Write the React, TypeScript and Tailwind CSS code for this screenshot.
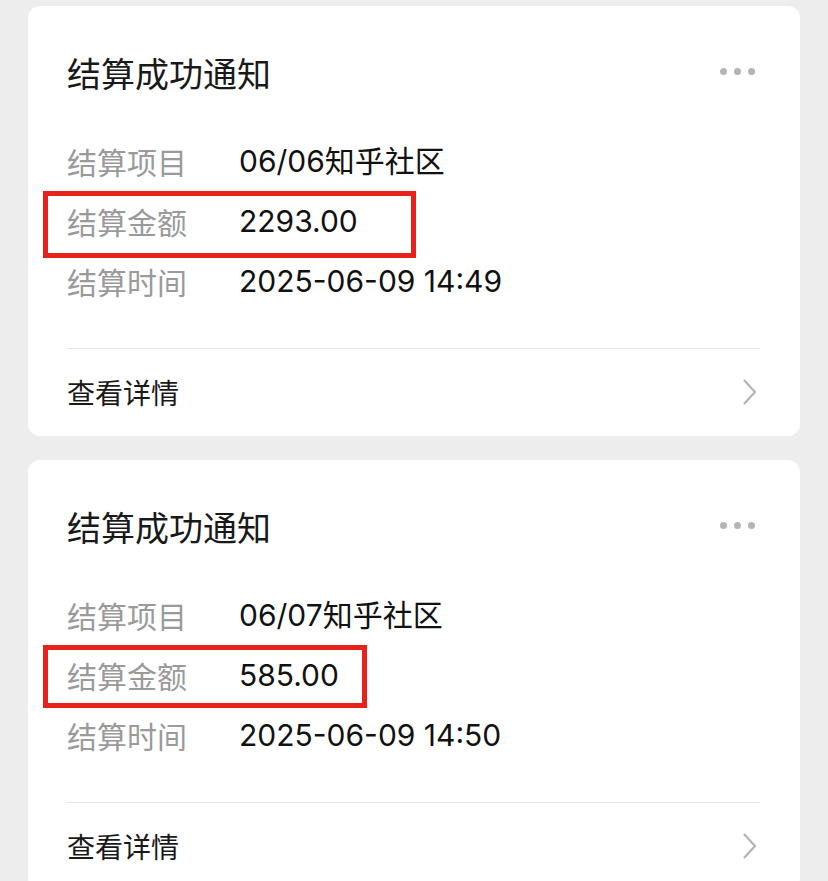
type Item = {
  project: string;
  amount: string;
  time: string;
  box: { top: number; width: number; height: number };
};

const ITEMS: Item[] = [
  { project: '06/06知乎社区', amount: '2293.00', time: '2025-06-09 14:49', box: { top: 0, width: 373, height: 67 } },
  { project: '06/07知乎社区', amount: '585.00', time: '2025-06-09 14:50', box: { top: 0, width: 324, height: 63 } },
];

const FONT = "font-['Noto_Sans_CJK_SC','Noto_Sans',sans-serif]";

function Row({ label, value, box }: { label: string; value: string; box?: Item['box'] }) {
  return (
    <div className="relative flex h-[60px] items-center">
      <span className="w-[172px] text-[30px] leading-none text-[#9a9a9a]">{label}</span>
      <span className="font-['Inter','Noto_Sans_CJK_SC',sans-serif] text-[30px] leading-none text-[#111111]">{value}</span>
      {box && (
        <div
          className="pointer-events-none absolute left-[-24px] border-[5px] border-[#e8221a]"
          style={{ top: box.top, width: box.width, height: box.height }}
        />
      )}
    </div>
  );
}

function Card({ item }: { item: Item }) {
  return (
    <div className="rounded-[12px] bg-white pl-[39px] pr-[40px]">
      <div className="flex h-[87px] items-end justify-between">
        <h2 className="h-[40px] text-[34px] leading-[40px] font-normal text-[#191919]">结算成功通知</h2>
        <div className="mb-[18px] flex gap-[7px] pr-[5px]">
          <span className="h-[7px] w-[7px] rounded-full bg-[#b4b4b4]" />
          <span className="h-[7px] w-[7px] rounded-full bg-[#b4b4b4]" />
          <span className="h-[7px] w-[7px] rounded-full bg-[#b4b4b4]" />
        </div>
      </div>
      <div className="mt-[38px]">
        <Row label="结算项目" value={item.project} />
        <Row label="结算金额" value={item.amount} box={item.box} />
        <Row label="结算时间" value={item.time} />
      </div>
      <div className="mt-[37px] h-px bg-[#e6e6e6]" />
      <div className="flex h-[87px] items-start justify-between pt-[23px]">
        <span className="text-[28px] leading-[40px] text-[#191919]">查看详情</span>
        <svg width="16" height="28" viewBox="0 0 16 28" className="mt-[6px] mr-[2px]">
          <path d="M2 2 L13 14 L2 26" fill="none" stroke="#b4b4b4" strokeWidth="2.2" />
        </svg>
      </div>
    </div>
  );
}

export default function App() {
  return (
    <div className={`min-h-[881px] bg-[#ededed] px-[28px] pt-[6px] ${FONT}`}>
      <div className="flex flex-col gap-[24px]">
        {ITEMS.map((item) => (
          <Card key={item.project} item={item} />
        ))}
      </div>
    </div>
  );
}
